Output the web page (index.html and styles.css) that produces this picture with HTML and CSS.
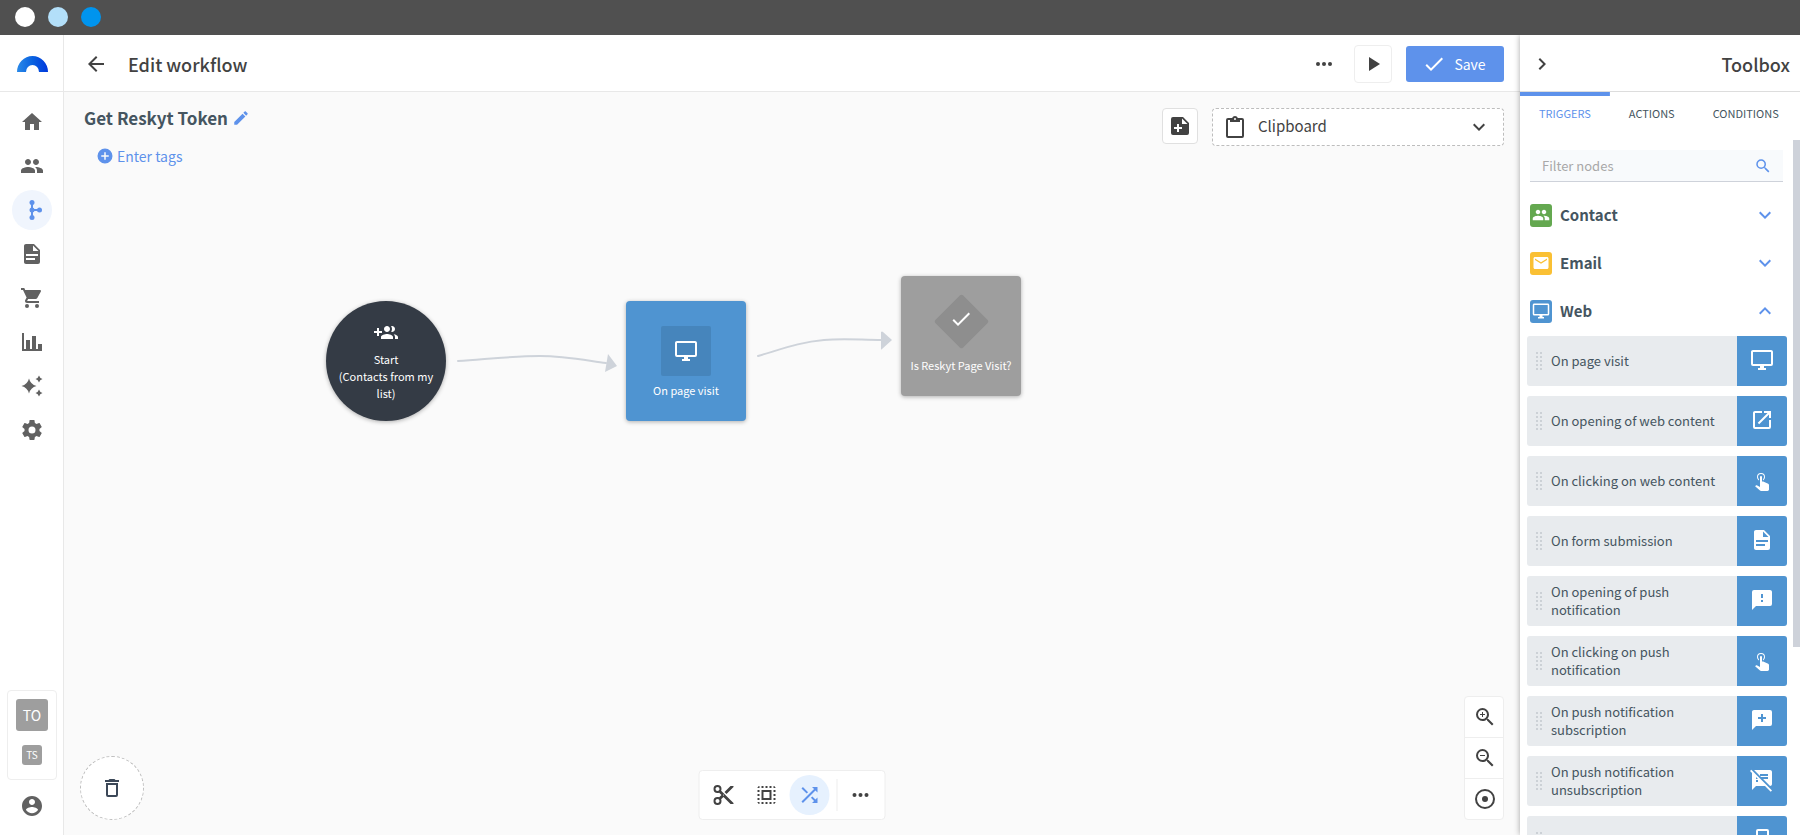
FILE: index.html
```html
<!DOCTYPE html>
<html lang="en">
<head>
<meta charset="utf-8">
<meta name="viewport" content="width=device-width, initial-scale=1">
<title>Edit workflow</title>
<link rel="stylesheet" href="styles.css">
</head>
<body>
<svg class="sprite" aria-hidden="true">
  <symbol id="i-home" viewBox="0 0 24 24"><path d="M10 20v-6h4v6h5v-8h3L12 3 2 12h3v8z"/></symbol>
  <symbol id="i-people" viewBox="0 0 24 24"><path d="M16 11c1.66 0 2.99-1.34 2.99-3S17.66 5 16 5c-1.66 0-3 1.34-3 3s1.34 3 3 3zm-8 0c1.66 0 2.99-1.34 2.99-3S9.66 5 8 5C6.34 5 5 6.34 5 8s1.34 3 3 3zm0 2c-2.33 0-7 1.17-7 3.5V19h14v-2.5c0-2.33-4.67-3.5-7-3.5zm8 0c-.29 0-.62.02-.97.05 1.16.84 1.97 1.97 1.97 3.45V19h6v-2.5c0-2.33-4.67-3.5-7-3.5z"/></symbol>
  <symbol id="i-flow" viewBox="0 0 24 24"><path d="M11 4h2v7h6v2h-6v7h-2z"/><circle cx="12" cy="4.500" r="2.500"/><circle cx="12" cy="12" r="2.500"/><circle cx="12" cy="19.500" r="2.500"/><circle cx="19.500" cy="12" r="2.500"/></symbol>
  <symbol id="i-doc" viewBox="0 0 24 24"><path d="M13,9H18.5L13,3.5V9M6,2H14L20,8V20A2,2 0 0,1 18,22H6C4.89,22 4,21.1 4,20V4C4,2.89 4.89,2 6,2M15,18V16H6V18H15M18,14V12H6V14H18Z"/></symbol>
  <symbol id="i-cart" viewBox="0 0 24 24"><path d="M1,2H4.27L5.21,4H20A1,1 0 0,1 21,5C21,5.17 20.95,5.34 20.88,5.5L17.3,11.97C16.96,12.58 16.3,13 15.55,13H8.1L7.2,14.63L7.17,14.75A0.25,0.25 0 0,0 7.42,15H19V17H7C5.89,17 5,16.1 5,15C5,14.65 5.09,14.32 5.24,14.04L6.6,11.59L3,4H1V2Z"/><circle cx="7" cy="20" r="2"/><circle cx="17" cy="20" r="2"/></symbol>
  <symbol id="i-chart" viewBox="0 0 24 24"><path d="M22,21H2V3H4V19H6V10H10V19H12V6H16V19H18V14H22V21Z"/></symbol>
  <symbol id="i-spark" viewBox="0 0 24 24"><path d="M9 4.500Q10.500 10.500 16.500 12Q10.500 13.500 9 19.500Q7.500 13.500 1.500 12Q7.500 10.500 9 4.500zM19 1.500Q19.800 4.200 22.500 5Q19.800 5.800 19 8.500Q18.200 5.800 15.500 5Q18.200 4.200 19 1.500zM19 15.500Q19.800 18.200 22.500 19Q19.800 19.800 19 22.500Q18.200 19.800 15.500 19Q18.200 18.200 19 15.500z"/></symbol>
  <symbol id="i-cog" viewBox="0 0 24 24"><path d="M12,15.5A3.5,3.5 0 0,1 8.500,12A3.500,3.500 0 0,1 12,8.500A3.500,3.500 0 0,1 15.500,12A3.500,3.500 0 0,1 12,15.500M19.430,12.970C19.470,12.650 19.500,12.330 19.500,12C19.500,11.670 19.470,11.340 19.430,11L21.540,9.370C21.730,9.220 21.780,8.950 21.660,8.730L19.660,5.270C19.540,5.050 19.270,4.960 19.050,5.050L16.560,6.050C16.040,5.660 15.500,5.320 14.870,5.070L14.500,2.420C14.460,2.180 14.250,2 14,2H10C9.750,2 9.540,2.180 9.500,2.420L9.130,5.070C8.500,5.320 7.960,5.660 7.440,6.050L4.950,5.050C4.730,4.960 4.460,5.050 4.340,5.270L2.340,8.730C2.210,8.950 2.270,9.220 2.460,9.370L4.570,11C4.530,11.340 4.500,11.670 4.500,12C4.500,12.330 4.530,12.650 4.570,12.970L2.460,14.630C2.270,14.780 2.210,15.050 2.340,15.270L4.340,18.730C4.460,18.950 4.730,19.030 4.950,18.950L7.440,17.940C7.960,18.340 8.500,18.680 9.130,18.930L9.500,21.580C9.540,21.820 9.750,22 10,22H14C14.250,22 14.460,21.820 14.500,21.580L14.870,18.930C15.500,18.670 16.040,18.340 16.560,17.940L19.050,18.950C19.270,19.030 19.540,18.950 19.660,18.730L21.660,15.270C21.780,15.050 21.730,14.780 21.540,14.630L19.430,12.970Z"/></symbol>
  <symbol id="i-user" viewBox="0 0 24 24"><path d="M12 2C6.480 2 2 6.480 2 12s4.480 10 10 10 10-4.480 10-10S17.520 2 12 2zm0 3c1.660 0 3 1.340 3 3s-1.340 3-3 3-3-1.340-3-3 1.340-3 3-3zm0 14.200c-2.500 0-4.710-1.280-6-3.220.030-1.990 4-3.080 6-3.080 1.990 0 5.970 1.090 6 3.080-1.290 1.940-3.500 3.220-6 3.220z"/></symbol>
  <symbol id="i-back" viewBox="0 0 24 24"><path d="M20 11H7.830l5.590-5.590L12 4l-8 8 8 8 1.410-1.410L7.830 13H20v-2z"/></symbol>
  <symbol id="i-dots" viewBox="0 0 24 24"><circle cx="6" cy="12" r="2"/><circle cx="12" cy="12" r="2"/><circle cx="18" cy="12" r="2"/></symbol>
  <symbol id="i-play" viewBox="0 0 24 24"><path d="M8 5v14l11-7z"/></symbol>
  <symbol id="i-check" viewBox="0 0 24 24"><path d="M21,7L9,19L3.500,13.500L4.910,12.090L9,16.170L19.590,5.590L21,7Z"/></symbol>
  <symbol id="i-pencil" viewBox="0 0 24 24"><path d="M20.710,7.040C21.100,6.650 21.100,6 20.710,5.630L18.370,3.290C18,2.900 17.350,2.900 16.960,3.290L15.120,5.120L18.870,8.870M3,17.250V21H6.750L17.810,9.930L14.060,6.180L3,17.250Z"/></symbol>
  <symbol id="i-plus" viewBox="0 0 24 24"><path d="M17,13H13V17H11V13H7V11H11V7H13V11H17M12,2A10,10 0 0,0 2,12A10,10 0 0,0 12,22A10,10 0 0,0 22,12A10,10 0 0,0 12,2Z"/></symbol>
  <symbol id="i-note" viewBox="0 0 24 24"><path fill-rule="evenodd" d="M15 3H5a2 2 0 0 0-2 2v14a2 2 0 0 0 2 2h14a2 2 0 0 0 2-2V9zM14 10V4.500L19.500 10zM9 10h2v3h3v2h-3v3H9v-3H6v-2h3z"/></symbol>
  <symbol id="i-clip" viewBox="0 0 24 24"><path d="M19,3H14.820C14.400,1.840 13.300,1 12,1C10.700,1 9.600,1.840 9.180,3H5A2,2 0 0,0 3,5V21A2,2 0 0,0 5,23H19A2,2 0 0,0 21,21V5A2,2 0 0,0 19,3M12,3A1,1 0 0,1 13,4A1,1 0 0,1 12,5A1,1 0 0,1 11,4A1,1 0 0,1 12,3M7,7H17V5H19V21H5V5H7V7Z"/></symbol>
  <symbol id="i-chev" viewBox="0 0 24 24"><path d="M7.410,8.580L12,13.170L16.590,8.580L18,10L12,16L6,10L7.410,8.580Z"/></symbol>
  <symbol id="i-search" viewBox="0 0 24 24"><path d="M9.500,3A6.500,6.500 0 0,1 16,9.500C16,11.110 15.410,12.590 14.440,13.730L14.710,14H15.500L20.500,19L19,20.500L14,15.500V14.710L13.730,14.440C12.590,15.410 11.110,16 9.500,16A6.500,6.500 0 0,1 3,9.500A6.500,6.500 0 0,1 9.500,3M9.500,5C7,5 5,7 5,9.500C5,12 7,14 9.500,14C12,14 14,12 14,9.500C14,7 12,5 9.500,5Z"/></symbol>
  <symbol id="i-zin" viewBox="0 0 24 24"><use href="#i-search"/><path d="M12,10H10V12H9V10H7V9H9V7H10V9H12V10Z"/></symbol>
  <symbol id="i-zout" viewBox="0 0 24 24"><use href="#i-search"/><path d="M7,9H12V10H7V9Z"/></symbol>
  <symbol id="i-target" viewBox="0 0 24 24"><path d="M12,2A10,10 0 1,0 12,22A10,10 0 1,0 12,2M12,4A8,8 0 1,1 12,20A8,8 0 1,1 12,4"/><circle cx="12" cy="12" r="3"/></symbol>
  <symbol id="i-mail" viewBox="0 0 24 24"><path d="M20 4H4c-1.100 0-1.990.900-1.990 2L2 18c0 1.100.900 2 2 2h16c1.100 0 2-.900 2-2V6c0-1.100-.900-2-2-2zm0 4l-8 5-8-5V6l8 5 8-5v2z"/></symbol>
  <symbol id="i-screen" viewBox="0 0 24 24"><path d="M21,16H3V4H21M21,2H3C1.890,2 1,2.890 1,4V16A2,2 0 0,0 3,18H10V20H8V22H16V20H14V18H21A2,2 0 0,0 23,16V4C23,2.890 22.100,2 21,2Z"/></symbol>
  <symbol id="i-open" viewBox="0 0 24 24"><path d="M14,3V5H17.590L7.760,14.830L9.170,16.240L19,6.410V10H21V3M19,19H5V5H12V3H5C3.890,3 3,3.900 3,5V19A2,2 0 0,0 5,21H19A2,2 0 0,0 21,19V12H19V19Z"/></symbol>
  <symbol id="i-tap" viewBox="0 0 24 24"><path d="M10,9A1,1 0 0,1 11,8A1,1 0 0,1 12,9V13.470L13.210,13.600L18.150,15.790C18.680,16.030 19,16.560 19,17.140V21.500C18.970,22.320 18.320,22.970 17.500,23H11C10.620,23 10.260,22.850 10,22.570L5.100,18.370L5.840,17.600C6.030,17.390 6.300,17.280 6.580,17.280H6.800L10,19V9M11,5A4,4 0 0,1 15,9C15,10.500 14.200,11.770 13,12.460V11.240C13.610,10.690 14,9.890 14,9A3,3 0 0,0 11,6A3,3 0 0,0 8,9C8,9.890 8.390,10.690 9,11.240V12.460C7.800,11.770 7,10.500 7,9A4,4 0 0,1 11,5Z"/></symbol>
  <symbol id="i-alert" viewBox="0 0 24 24"><path d="M13,10H11V6H13V10M13,14H11V12H13M20,2H4A2,2 0 0,0 2,4V22L6,18H20A2,2 0 0,0 22,16V4C22,2.890 21.100,2 20,2Z"/></symbol>
  <symbol id="i-msgplus" viewBox="0 0 24 24"><path d="M20,2A2,2 0 0,1 22,4V16A2,2 0 0,1 20,18H6L2,22V4C2,2.890 2.900,2 4,2H20M11,6V9H8V11H11V14H13V11H16V9H13V6H11Z"/></symbol>
  <symbol id="i-msgoff" viewBox="0 0 24 24"><path d="M10.540 11l-.540-.540L7.540 8 6 6.460 2.380 2.840 1.270 1.730 0 3l2.010 2.010L2 22l4-4h9l5.730 5.730L22 22.460 17.540 18l-7-7zM8 14H6v-2h2v2zm-2-3V9l2 2H6zm14-9H4.080L10 7.920V6h8v2h-7.920l1 1H18v2h-4.920l6.990 6.990C21.140 17.950 22 17.080 22 16V4c0-1.100-.900-2-2-2z"/></symbol>
  <symbol id="i-phone" viewBox="0 0 24 24"><path fill-rule="evenodd" d="M8 1h9a2 2 0 0 1 2 2v18a2 2 0 0 1-2 2H8a2 2 0 0 1-2-2V3a2 2 0 0 1 2-2zM8 3v18h9V3z"/></symbol>
  <symbol id="i-trash" viewBox="0 0 24 24"><path d="M6,19A2,2 0 0,0 8,21H16A2,2 0 0,0 18,19V7H6V19M8,9H16V19H8V9M15.500,4L14.500,3H9.500L8.500,4H5V6H19V4H15.500Z"/></symbol>
  <symbol id="i-addpeople" viewBox="0 0 24 24"><path d="M13 13C11 13 7 14 7 16V18H19V16C19 14 15 13 13 13M19.620 13.160C20.450 13.880 21 14.820 21 16V18H24V16C24 14.460 21.630 13.500 19.620 13.160M13 11C14.660 11 16 9.660 16 8S14.660 5 13 5 10 6.340 10 8 11.340 11 13 11M18 11C19.660 11 21 9.660 21 8S19.660 5 18 5C17.680 5 17.370 5.050 17.080 5.140C17.650 5.950 18 6.940 18 8S17.650 10.040 17.080 10.850C17.370 10.950 17.680 11 18 11M8 10H5V7H3V10H0V12H3V15H5V12H8V10Z"/></symbol>
  <symbol id="i-cut" viewBox="0 0 24 24"><path d="M19,3L13,9L15,11L22,4V3M12,12.500A0.500,0.500 0 0,1 11.500,12A0.500,0.500 0 0,1 12,11.500A0.500,0.500 0 0,1 12.500,12A0.500,0.500 0 0,1 12,12.500M6,20A2,2 0 0,1 4,18C4,16.890 4.900,16 6,16A2,2 0 0,1 8,18C8,19.110 7.100,20 6,20M6,8A2,2 0 0,1 4,6C4,4.890 4.900,4 6,4A2,2 0 0,1 8,6C8,7.110 7.100,8 6,8M9.640,7.640C9.870,7.140 10,6.590 10,6A4,4 0 0,0 6,2A4,4 0 0,0 2,6A4,4 0 0,0 6,10C6.590,10 7.140,9.870 7.640,9.640L10,12L7.640,14.360C7.140,14.130 6.590,14 6,14A4,4 0 0,0 2,18A4,4 0 0,0 6,22A4,4 0 0,0 10,18C10,17.410 9.870,16.860 9.640,16.360L12,14L19,21H22V20L9.640,7.640Z"/></symbol>
  <symbol id="i-select" viewBox="0 0 24 24"><path d="M3 5h2V3c-1.100 0-2 .900-2 2zm0 8h2v-2H3v2zm4 8h2v-2H7v2zM3 9h2V7H3v2zm10-6h-2v2h2V3zm6 0v2h2c0-1.100-.900-2-2-2zM5 21v-2H3c0 1.100.900 2 2 2zm-2-4h2v-2H3v2zM9 3H7v2h2V3zm2 18h2v-2h-2v2zm8-8h2v-2h-2v2zm0 8c1.100 0 2-.900 2-2h-2v2zm0-12h2V7h-2v2zm0 8h2v-2h-2v2zm-4 4h2v-2h-2v2zm0-16h2V3h-2v2zM7 17h10V7H7v10zm2-8h6v6H9V9z"/></symbol>
  <symbol id="i-shuffle" viewBox="0 0 24 24"><path d="M10.590 9.170L5.410 4 4 5.410l5.170 5.170 1.420-1.410zM14.500 4l2.040 2.040L4 18.590 5.410 20 17.960 7.460 20 9.500V4h-5.500zm.330 9.410l-1.410 1.410 3.130 3.130L14.500 20H20v-5.500l-2.040 2.040-3.130-3.130z"/></symbol>
</svg>

<div class="window-bar"><span class="dot dot-white"></span><span class="dot dot-light"></span><span class="dot dot-blue"></span></div>

<div class="app">
  <aside class="sidebar">
    <a class="logo" href="#" aria-label="Dashboard">
      <svg width="31" height="16" viewBox="0 0 31 16"><defs><linearGradient id="arch" x1="0" y1="0" x2="1" y2="0"><stop offset="0" stop-color="#2b8ae8"/><stop offset=".5" stop-color="#0a62e0"/><stop offset="1" stop-color="#0038dc"/></linearGradient></defs><path fill="url(#arch)" d="M0 16A15.500 16 0 0 1 31 16H22A6.500 7 0 0 0 9 16z"/></svg>
    </a>
    <nav class="nav" aria-label="Main">
      <a class="nav-link" href="#" aria-label="Home"><svg class="icon"><use href="#i-home"/></svg></a>
      <a class="nav-link" href="#" aria-label="Contacts"><svg class="icon"><use href="#i-people"/></svg></a>
      <a class="nav-link active" href="#" aria-label="Workflows"><svg class="icon"><use href="#i-flow"/></svg></a>
      <a class="nav-link" href="#" aria-label="Content"><svg class="icon"><use href="#i-doc"/></svg></a>
      <a class="nav-link" href="#" aria-label="Commerce"><svg class="icon"><use href="#i-cart"/></svg></a>
      <a class="nav-link" href="#" aria-label="Reports"><svg class="icon"><use href="#i-chart"/></svg></a>
      <a class="nav-link" href="#" aria-label="Assistant"><svg class="icon"><use href="#i-spark"/></svg></a>
      <a class="nav-link" href="#" aria-label="Settings"><svg class="icon"><use href="#i-cog"/></svg></a>
    </nav>
    <div class="accounts">
      <button class="badge badge-large" type="button">TO</button>
      <button class="badge" type="button">TS</button>
    </div>
    <a class="profile" href="#" aria-label="Profile"><svg class="icon"><use href="#i-user"/></svg></a>
  </aside>

  <main class="main">
    <header class="header">
      <button class="bare" type="button" aria-label="Back"><svg class="icon"><use href="#i-back"/></svg></button>
      <h1 class="title">Edit workflow</h1>
      <div class="actions">
        <button class="bare" type="button" aria-label="More"><svg class="icon"><use href="#i-dots"/></svg></button>
        <button class="play" type="button" aria-label="Run"><svg class="icon"><use href="#i-play"/></svg></button>
        <button class="save" type="button"><svg class="icon"><use href="#i-check"/></svg>Save</button>
      </div>
    </header>

    <section class="canvas" aria-label="Workflow canvas">
      <div class="canvas-top">
        <div class="meta">
          <div class="name-row"><h2 class="name">Get Reskyt Token</h2><button class="bare accent" type="button" aria-label="Rename"><svg class="icon icon-small"><use href="#i-pencil"/></svg></button></div>
          <button class="tags" type="button"><svg class="icon icon-small"><use href="#i-plus"/></svg>Enter tags</button>
        </div>
        <div class="canvas-tools">
          <button class="note" type="button" aria-label="Add note"><svg class="icon"><use href="#i-note"/></svg></button>
          <div class="clipboard">
            <svg class="icon"><use href="#i-clip"/></svg>
            <select class="clipboard-select" aria-label="Clipboard"><option>Clipboard</option></select>
            <svg class="icon"><use href="#i-chev"/></svg>
          </div>
        </div>
      </div>

      <svg class="links" aria-hidden="true">
        <g fill="none" stroke="#ced3da" stroke-width="2" stroke-linecap="round"><path d="M394 269C424 267 450 264 476 264C500 264 520 268 542 271"/><path d="M694 264C718 257 736 250 760 248C780 246 797 248 818 248"/></g>
        <g fill="#ced3da"><path d="M544 262L553 274L541 280z"/><path d="M817 240q1-1 2 0L828 248L818 257q-1 1-1 0z"/></g>
      </svg>
      <div class="node node-start"><svg class="icon"><use href="#i-addpeople"/></svg><span>Start<br>(Contacts from my list)</span></div>
      <div class="node node-web"><span class="node-icon"><svg class="icon"><use href="#i-screen"/></svg></span><span>On page visit</span></div>
      <div class="node node-check"><span class="node-diamond"><svg class="icon"><use href="#i-check"/></svg></span><span>Is Reskyt Page Visit?</span></div>

      <button class="trash" type="button" aria-label="Delete"><svg class="icon"><use href="#i-trash"/></svg></button>
      <div class="toolbar">
        <button class="tool" type="button" aria-label="Cut"><svg class="icon"><use href="#i-cut"/></svg></button>
        <button class="tool" type="button" aria-label="Select all"><svg class="icon"><use href="#i-select"/></svg></button>
        <button class="tool tool-active" type="button" aria-label="Curved links"><svg class="icon"><use href="#i-shuffle"/></svg></button>
        <span class="divider"></span>
        <button class="tool" type="button" aria-label="More tools"><svg class="icon"><use href="#i-dots"/></svg></button>
      </div>
      <div class="zoom">
        <button class="zoom-button" type="button" aria-label="Zoom in"><svg class="icon"><use href="#i-zin"/></svg></button>
        <button class="zoom-button" type="button" aria-label="Zoom out"><svg class="icon"><use href="#i-zout"/></svg></button>
        <button class="zoom-button" type="button" aria-label="Center"><svg class="icon"><use href="#i-target"/></svg></button>
      </div>
    </section>
  </main>

  <aside class="toolbox">
    <header class="toolbox-head">
      <button class="bare" type="button" aria-label="Collapse"><svg class="icon turn-right"><use href="#i-chev"/></svg></button>
      <h2 class="toolbox-title">Toolbox</h2>
    </header>
    <div class="tabs" role="tablist">
      <button class="tab tab-active" type="button" role="tab" aria-selected="true">TRIGGERS</button>
      <button class="tab" type="button" role="tab">ACTIONS</button>
      <button class="tab" type="button" role="tab">CONDITIONS</button>
    </div>
    <div class="list-wrap">
      <div class="list">
        <label class="filter"><input class="filter-input" type="text" placeholder="Filter nodes" aria-label="Filter nodes"><svg class="icon icon-small"><use href="#i-search"/></svg></label>
        <button class="group" type="button"><span class="group-icon green"><svg class="icon"><use href="#i-people"/></svg></span><span class="group-name">Contact</span><svg class="icon"><use href="#i-chev"/></svg></button>
        <button class="group" type="button"><span class="group-icon yellow"><svg class="icon"><use href="#i-mail"/></svg></span><span class="group-name">Email</span><svg class="icon"><use href="#i-chev"/></svg></button>
        <button class="group" type="button" aria-expanded="true"><span class="group-icon blue"><svg class="icon"><use href="#i-screen"/></svg></span><span class="group-name">Web</span><svg class="icon turn-up"><use href="#i-chev"/></svg></button>
        <ul class="items">
          <li class="item"><span class="grip"></span><span class="item-name">On page visit</span><span class="item-icon"><svg class="icon"><use href="#i-screen"/></svg></span></li>
          <li class="item"><span class="grip"></span><span class="item-name">On opening of web content</span><span class="item-icon"><svg class="icon"><use href="#i-open"/></svg></span></li>
          <li class="item"><span class="grip"></span><span class="item-name">On clicking on web content</span><span class="item-icon"><svg class="icon"><use href="#i-tap"/></svg></span></li>
          <li class="item"><span class="grip"></span><span class="item-name">On form submission</span><span class="item-icon"><svg class="icon"><use href="#i-doc"/></svg></span></li>
          <li class="item"><span class="grip"></span><span class="item-name">On opening of push notification</span><span class="item-icon"><svg class="icon"><use href="#i-alert"/></svg></span></li>
          <li class="item"><span class="grip"></span><span class="item-name">On clicking on push notification</span><span class="item-icon"><svg class="icon"><use href="#i-tap"/></svg></span></li>
          <li class="item"><span class="grip"></span><span class="item-name">On push notification subscription</span><span class="item-icon"><svg class="icon"><use href="#i-msgplus"/></svg></span></li>
          <li class="item"><span class="grip"></span><span class="item-name">On push notification unsubscription</span><span class="item-icon"><svg class="icon"><use href="#i-msgoff"/></svg></span></li>
          <li class="item"><span class="grip"></span><span class="item-name"></span><span class="item-icon"><svg class="icon"><use href="#i-phone"/></svg></span></li>
        </ul>
      </div>
      <span class="scroll-thumb"></span>
    </div>
  </aside>
</div>
</body>
</html>
```
FILE: styles.css
```css
* { box-sizing: border-box; }

body {
  margin: 0;
  height: 100vh;
  display: flex;
  flex-direction: column;
  overflow: hidden;
  background: #fff;
  color: #424242;
  font-family: "Noto Sans CJK SC", "Noto Sans", sans-serif;
  font-size: 13px;
  line-height: 18px;
}

h1, h2 { margin: 0; }

button, input, select {
  margin: 0;
  padding: 0;
  border: 0;
  background: none;
  color: inherit;
  font: inherit;
}

.sprite { position: absolute; width: 0; height: 0; }
.icon { width: 24px; height: 24px; flex: none; display: block; fill: currentColor; }
.icon-small { width: 18px; height: 18px; }
.turn-right { transform: rotate(-90deg); }
.turn-up { transform: rotate(180deg); }

.window-bar {
  flex: none;
  height: 35px;
  padding: 0 15px 1px;
  display: flex;
  align-items: center;
  gap: 12px;
  background: #505050;
}
.dot { width: 20px; height: 20px; border-radius: 50%; }
.dot + .dot { margin-left: 1px; }
.dot-white { background: #fff; }
.dot-light { background: #b3dff9; }
.dot-blue { background: #0094ee; }

.app { flex: 1; min-height: 0; display: grid; grid-template-columns: 64px 1fr 280px; }

/* Sidebar */
.sidebar {
  display: flex;
  flex-direction: column;
  align-items: center;
  border-right: 1px solid #e8e8e8;
  color: #616161;
}
.logo {
  width: 100%;
  height: 57px;
  padding: 2px 0 0 2px;
  display: flex;
  align-items: center;
  justify-content: center;
  border-bottom: 1px solid #e8e8e8;
}
.nav { margin: 10px 0 auto 1px; display: flex; flex-direction: column; gap: 4px; }
.nav-link {
  width: 40px;
  height: 40px;
  display: grid;
  place-items: center;
  border-radius: 50%;
  color: inherit;
}
.nav-link.active { background: #f0f5fd; color: #5e92eb; }
.accounts {
  width: 50px;
  height: 90px;
  margin-left: 1px;
  display: flex;
  flex-direction: column;
  align-items: center;
  gap: 14px;
  padding-top: 8px;
  border: 1px solid #eee;
  border-radius: 4px;
}
.badge {
  width: 20px;
  height: 20px;
  border-radius: 3px;
  background: #9e9e9e;
  color: #fff;
  font-size: 10px;
  line-height: 20px;
}
.badge-large { width: 32px; height: 32px; font-size: 14px; line-height: 32px; }
.profile { margin: 14px 0 17px 1px; color: inherit; }

/* Main header */
.main { min-width: 0; display: flex; flex-direction: column; }
.header {
  flex: none;
  height: 57px;
  padding: 2px 16px 0 20px;
  display: flex;
  align-items: center;
  border-bottom: 1px solid #e8e8e8;
}
.bare { display: block; }
.accent { color: #5e92eb; }
.title { margin-left: 20px; font-size: 18px; line-height: 24px; font-weight: 500; }
.actions { margin-left: auto; display: flex; align-items: center; gap: 14px; }
.play {
  width: 38px;
  height: 38px;
  margin-left: 4px;
  display: grid;
  place-items: center;
  border: 1px solid #eee;
  border-radius: 4px;
}
.save {
  width: 98px;
  height: 36px;
  padding-right: 2px;
  display: flex;
  align-items: center;
  justify-content: center;
  gap: 8px;
  border-radius: 3px;
  background: #5e92eb;
  color: #fff;
  font-size: 14px;
}

/* Canvas */
.canvas { position: relative; flex: 1; min-height: 0; background: #fafafa; }
.canvas-top { padding: 16px 16px 0 20px; display: flex; justify-content: space-between; align-items: flex-start; }
.name-row { display: flex; align-items: center; gap: 4px; }
.name { font-size: 17px; line-height: 20px; font-weight: 700; color: #455560; }
.tags { margin: 19px 0 0 12px; display: flex; align-items: center; gap: 3px; color: #5e92eb; font-size: 14px; }
.canvas-tools { display: flex; gap: 14px; }
.note {
  width: 36px;
  height: 36px;
  display: grid;
  place-items: center;
  border: 1px solid #e0e0e0;
  border-radius: 4px;
  background: #fff;
}
.clipboard {
  width: 292px;
  height: 38px;
  padding: 0 12px 0 10px;
  display: flex;
  align-items: center;
  gap: 11px;
  border: 1px dashed #bdbdbd;
  border-radius: 4px;
  background: #fff;
}
.clipboard-select { flex: 1; padding-bottom: 2px; appearance: none; font-size: 15px; line-height: 22px; }

.links { position: absolute; inset: 0; width: 100%; height: 100%; pointer-events: none; }
.node {
  position: absolute;
  width: 120px;
  height: 120px;
  display: flex;
  flex-direction: column;
  align-items: center;
  justify-content: center;
  gap: 6px;
  border-radius: 4px;
  box-shadow: 0 1px 4px rgba(0, 0, 0, .3);
  color: #fff;
  font-size: 11px;
  line-height: 17px;
  text-align: center;
}
.node-start { left: 262px; top: 209px; padding: 0 12px; border-radius: 50%; background: #343b45; }
.node-web { left: 562px; top: 209px; padding-top: 3px; background: #4f94d1; }
.node-check { left: 837px; top: 184px; gap: 10px; padding-bottom: 2px; background: #9e9e9e; }
.node-icon { width: 50px; height: 50px; display: grid; place-items: center; border-radius: 2px; background: #4685bc; }
.node-diamond { width: 50px; height: 50px; display: grid; place-items: center; }
.node-diamond::before {
  content: "";
  grid-area: 1 / 1;
  width: 39px;
  height: 39px;
  border-radius: 2px;
  background: #8e8e8e;
  transform: rotate(45deg);
}
.node-diamond .icon { grid-area: 1 / 1; z-index: 1; margin-bottom: 6px; }

.trash {
  position: absolute;
  left: 16px;
  bottom: 15px;
  width: 64px;
  height: 64px;
  display: grid;
  place-items: center;
  border: 1px dashed #bdbdbd;
  border-radius: 50%;
  background: #fff;
  color: #3c4858;
}
.toolbar {
  position: absolute;
  left: 50%;
  bottom: 15px;
  transform: translateX(-50%);
  padding: 4px;
  display: flex;
  align-items: center;
  gap: 3px;
  border: 1px solid #eee;
  border-radius: 4px;
  background: #fff;
}
.tool { width: 40px; height: 40px; display: grid; place-items: center; border-radius: 50%; }
.tool-active { background: #e6f1fe; color: #5e92eb; }
.divider { width: 1px; height: 32px; margin-left: 4px; background: #eee; }
.zoom {
  position: absolute;
  right: 16px;
  bottom: 15px;
  width: 40px;
  border: 1px solid #eee;
  border-radius: 4px;
  background: #fff;
}
.zoom-button { width: 100%; height: 40px; padding-left: 2px; display: grid; place-items: center; }
.zoom-button + .zoom-button { height: 41px; border-top: 1px solid #eee; }

/* Toolbox */
.toolbox {
  position: relative;
  min-height: 0;
  display: flex;
  flex-direction: column;
  background: #fff;
  box-shadow: 0 0 6px rgba(0, 0, 0, .35);
  clip-path: inset(0 0 0 -8px);
}
.toolbox-head {
  flex: none;
  height: 57px;
  padding: 2px 10px 0;
  display: flex;
  align-items: center;
  justify-content: space-between;
  border-bottom: 1px solid #ddd;
}
.toolbox-title { font-size: 18px; line-height: 24px; font-weight: 500; }
.tabs { flex: none; height: 48px; display: flex; color: #455560; }
.tab { height: 44px; padding: 0 19px 6px; border-top: 4px solid transparent; font-size: 11px; white-space: nowrap; }
.tab-active { border-radius: 0 0 4px 4px; background: linear-gradient(#5e92eb, #5e92eb) top / 100% 4px no-repeat border-box; color: #5e92eb; }
.list-wrap { position: relative; flex: 1; min-height: 0; }
.list { height: 100%; overflow-y: auto; padding: 10px 13px 0 7px; scrollbar-width: none; }
.scroll-thumb { position: absolute; top: 0; right: 0; width: 7px; height: 73%; background: #ced2da; }
.filter {
  height: 32px;
  margin: 0 4px 9px 3px;
  padding: 0 11px 0 12px;
  display: flex;
  align-items: center;
  border-bottom: 1px solid #ced2da;
  background: #f8fafc;
}
.filter-input { flex: 1; min-width: 0; outline: 0; }
.filter-input::placeholder { color: #a8a8a8; opacity: 1; }
.filter .icon { color: #5e92eb; }
.group {
  width: 100%;
  height: 48px;
  padding: 0 10px 0 3px;
  display: flex;
  align-items: center;
  gap: 8px;
  color: #5e92eb;
  text-align: left;
}
.group-icon { width: 22px; height: 23px; display: grid; place-items: center; border-radius: 3px; color: #fff; }
.group-icon .icon { width: 18px; height: 18px; }
.green { background: #64a850; }
.yellow { background: #fac034; }
.blue { background: #4f94d1; }
.group-name { flex: 1; font-size: 15px; line-height: 20px; font-weight: 700; color: #455560; }
.items { margin: 1px 0 0; padding: 0; list-style: none; display: flex; flex-direction: column; gap: 10px; }
.item { height: 50px; display: flex; align-items: center; border-radius: 3px; overflow: hidden; background: #e8ebee; }
.grip {
  width: 8px;
  height: 18px;
  margin: 0 7px 0 9px;
  background: repeating-linear-gradient(90deg, transparent 0 2px, #e8ebee 2px 4px), repeating-linear-gradient(#ccd1d6 0 2px, transparent 2px 4px);
}
.item-name { flex: 1; padding-right: 16px; color: #455560; }
.item-icon { width: 50px; height: 50px; padding-bottom: 2px; display: grid; place-items: center; background: #4f94d1; color: #fff; }
```
